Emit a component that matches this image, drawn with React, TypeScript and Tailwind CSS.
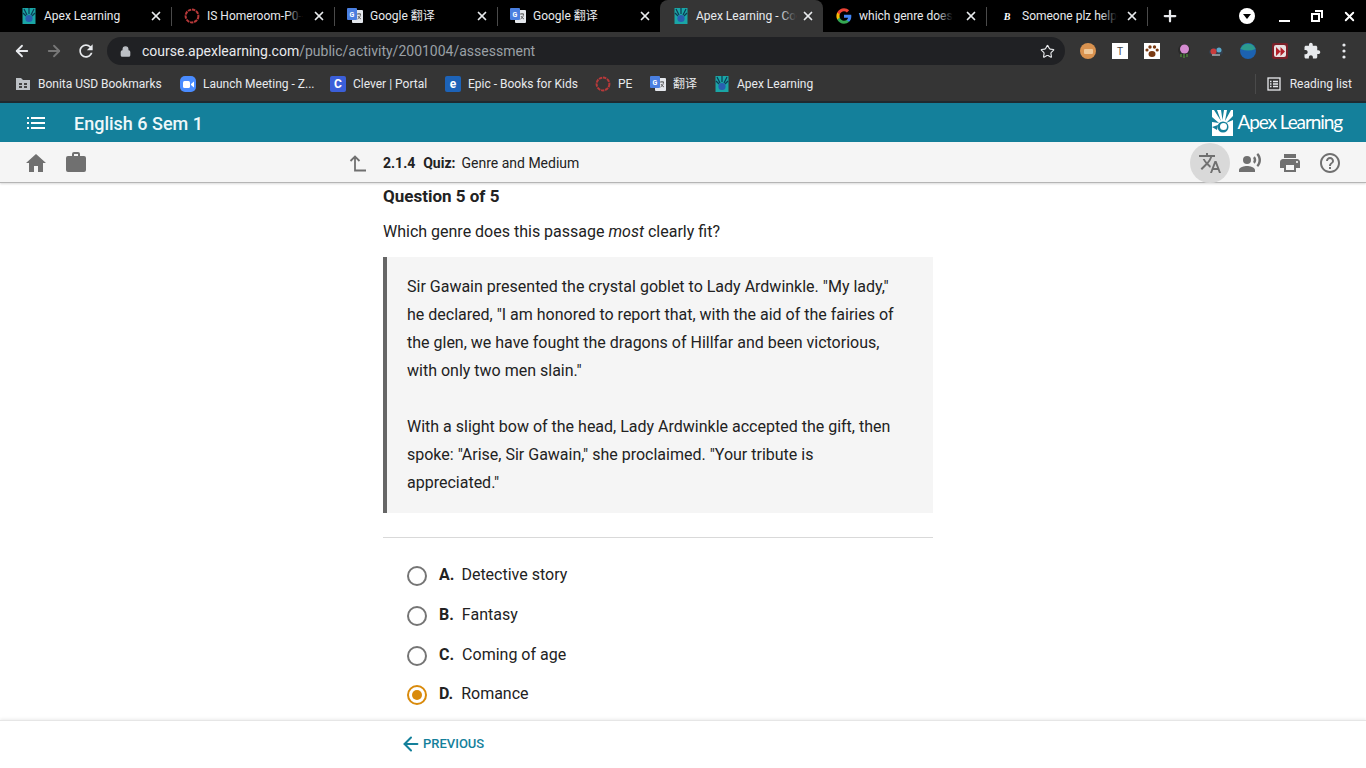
import { ArrowLeft, ArrowRight, Lock, Plus, Star, X } from 'lucide-react';
import type { ReactNode } from 'react';

const FONT = "font-['Roboto','Noto_Sans_CJK_SC',sans-serif]";

function ApexIcon({ size = 16 }: { size?: number }) {
  return (
    <svg width={size} height={size} viewBox="0 0 16 16">
      <rect x="1.5" y="0" width="13" height="16" fill="#1aa6a6" />
      <path d="M3 1l3 6M8 0v6M13 1l-3 6M2 5l3 3M14 5l-3 3" stroke="#0d3a55" strokeWidth="1.2" />
      <circle cx="8" cy="10.5" r="3.6" fill="#2a5fb0" />
    </svg>
  );
}

function RingIcon() {
  return (
    <svg width="16" height="16" viewBox="0 0 16 16">
      <circle cx="8" cy="8" r="6.4" fill="none" stroke="#b8393a" strokeWidth="2" strokeDasharray="3.4 0.8" />
    </svg>
  );
}

function TranslateFav() {
  return (
    <svg width="16" height="16" viewBox="0 0 16 16">
      <rect x="5" y="2" width="11" height="13" rx="1" fill="#e4e7ec" />
      <path d="M10 6h4M12 5v1M10.5 11c2-1 3-3 3-5M11 8c.6 1.4 1.6 2.4 3 3" stroke="#555" strokeWidth="0.9" fill="none" />
      <rect x="0" y="0" width="10" height="12" rx="1" fill="#4a7fe0" />
      <text x="2.4" y="8.6" fontSize="7" fontWeight="700" fill="#fff" fontFamily="Roboto">G</text>
    </svg>
  );
}

function GoogleIcon() {
  return (
    <svg width="16" height="16" viewBox="0 0 24 24">
      <path fill="#4285F4" d="M23 12.3c0-.8-.1-1.600-.2-2.300H12v4.500h6.200c-.3 1.400-1.100 2.600-2.300 3.400v2.800h3.700c2.100-2 3.400-4.900 3.400-8.400z" />
      <path fill="#34A853" d="M12 23.500c3.100 0 5.700-1 7.600-2.800l-3.700-2.800c-1 .7-2.300 1.100-3.900 1.100-3 0-5.500-2-6.400-4.700H1.800v2.900c1.900 3.800 5.800 6.300 10.200 6.300z" />
      <path fill="#FBBC05" d="M5.600 14.300c-.5-1.400-.5-3 0-4.500V6.900H1.800c-1.600 3.200-1.600 7 0 10.300l3.800-2.900z" />
      <path fill="#EA4335" d="M12 5c1.700 0 3.200.6 4.400 1.700l3.300-3.300C17.700 1.600 15.100.5 12 .5 7.600.5 3.700 3 1.800 6.900l3.800 2.900C6.500 7 9 5 12 5z" />
    </svg>
  );
}

function BrainlyIcon() {
  return <span className="flex h-4 w-4 items-center justify-center font-['Liberation_Serif',serif] text-[10px] font-bold italic text-white">B</span>;
}

function ChromeTab({ icon, title, left, active, fade, last }: { icon: ReactNode; title: string; left?: boolean; active?: boolean; fade?: boolean; last?: boolean }) {
  return (
    <div className={`relative flex h-[32px] shrink-0 items-center pl-[13px] pr-[8px] ${last ? 'w-[161px]' : 'w-[163px]'} ${active ? 'rounded-t-[8px] bg-[#353535]' : ''}`}>
      {left && <span className="absolute left-0 top-[7px] h-[19px] w-px bg-[#4a4a4a]" />}
      <span className="mr-[7px] flex w-[16px] shrink-0 justify-center">{icon}</span>
      <span className="relative min-w-0 flex-1 whitespace-nowrap text-[12px] text-[#e8eaed]">
        <span className="relative">
          {title}
          {fade && <span className={`absolute inset-y-0 right-0 w-[16px] bg-gradient-to-r from-transparent ${active ? 'to-[#353535]' : 'to-black'}`} />}
        </span>
      </span>
      <X size={14} strokeWidth={3} className="ml-[6px] shrink-0 text-[#e8eaed]" />
    </div>
  );
}

function TabStrip() {
  return (
    <div className="flex h-[32px] items-center bg-black pl-[8px]">
      <ChromeTab icon={<ApexIcon />} title="Apex Learning" />
      <ChromeTab icon={<RingIcon />} title="IS Homeroom-P0-" left fade />
      <ChromeTab icon={<TranslateFav />} title="Google 翻译" left />
      <ChromeTab icon={<TranslateFav />} title="Google 翻译" left />
      <ChromeTab icon={<ApexIcon />} title="Apex Learning - Co" active fade />
      <ChromeTab icon={<GoogleIcon />} title="which genre does" fade />
      <ChromeTab icon={<BrainlyIcon />} title="Someone plz help" left fade last />
      <span className="h-[19px] w-px bg-[#4a4a4a]" />
      <Plus size={18} strokeWidth={3} className="ml-[13px] text-[#e8eaed]" />
      <div className="ml-auto flex items-center">
        <span className="flex h-[16px] w-[16px] items-center justify-center rounded-full bg-white">
          <span className="h-0 w-0 border-x-[4px] border-t-[5px] border-x-transparent border-t-black" />
        </span>
        <span className="ml-[24px] mt-[10px] h-[2px] w-[11px] bg-white" />
        <svg width="12" height="12" viewBox="0 0 12 12" className="ml-[21px]" fill="none" stroke="#fff" strokeWidth="2">
          <rect x="1" y="4" width="7" height="7" />
          <path d="M4 1h7v7" />
        </svg>
        <X size={15} strokeWidth={3} className="ml-[19px] mr-[9px] text-white" />
      </div>
    </div>
  );
}

function ExtBox({ children }: { children: ReactNode }) {
  return <span className="flex w-[32px] justify-center">{children}</span>;
}

function Toolbar() {
  return (
    <div className="flex h-[38px] items-center bg-[#353535]">
      <ArrowLeft size={18} strokeWidth={2.4} className="ml-[13px] text-[#e8eaed]" />
      <ArrowRight size={18} strokeWidth={2.4} className="ml-[14px] text-[#777]" />
      <svg width="20" height="20" viewBox="0 0 24 24" fill="#e8eaed" className="ml-[13px]">
        <path d="M17.650 6.350C16.200 4.900 14.210 4 12 4c-4.420 0-7.990 3.580-7.990 8s3.570 8 7.990 8c3.730 0 6.840-2.550 7.730-6h-2.080c-.82 2.330-3.040 4-5.650 4-3.310 0-6-2.690-6-6s2.690-6 6-6c1.660 0 3.140.69 4.220 1.780L13 11h7V4l-2.350 2.350z" />
      </svg>
      <div className="ml-[11px] flex h-[28px] w-[958px] items-center rounded-full bg-[#202124]">
        <Lock size={11} strokeWidth={3} fill="#bdc1c6" className="ml-[13px] text-[#bdc1c6]" />
        <span className="ml-[11px] text-[14px] text-[#e8eaed]">
          course.apexlearning.com<span className="text-[#9aa0a6]">/public/activity/2001004/assessment</span>
        </span>
        <Star size={15} strokeWidth={1.8} className="ml-auto mr-[10px] text-[#e8eaed]" />
      </div>
      <div className="ml-[7px] flex items-center">
        <ExtBox>
          <span className="flex h-[16px] w-[16px] items-center justify-center rounded-full bg-[#d9924f]">
            <span className="h-[5px] w-[9px] rounded-[1px] bg-[#f0c99a]" />
          </span>
        </ExtBox>
        <ExtBox>
          <span className="flex h-[16px] w-[16px] items-center justify-center bg-white font-['Liberation_Sans',sans-serif] text-[10px] text-[#444]">T</span>
        </ExtBox>
        <ExtBox>
          <svg width="16" height="16" viewBox="0 0 16 16">
            <rect width="16" height="16" fill="#fff" />
            <g fill="#7a3a12">
              <ellipse cx="8" cy="11" rx="3.500" ry="3" />
              <circle cx="3" cy="7" r="1.600" />
              <circle cx="6" cy="4" r="1.700" />
              <circle cx="10.500" cy="4" r="1.700" />
              <circle cx="13.200" cy="7" r="1.600" />
            </g>
          </svg>
        </ExtBox>
        <ExtBox>
          <svg width="16" height="16" viewBox="0 0 16 16">
            <circle cx="8" cy="7" r="6" fill="#2a2a2a" />
            <circle cx="8.500" cy="6" r="4.500" fill="#d48bd0" />
            <path d="M5 11v3M8 11v4M11 11v3" stroke="#4e8f3a" strokeWidth="1.300" />
          </svg>
        </ExtBox>
        <ExtBox>
          <svg width="16" height="16" viewBox="0 0 16 16">
            <ellipse cx="8" cy="9" rx="7" ry="4" fill="#33404f" />
            <circle cx="5.500" cy="8.500" r="3" fill="#c93c3c" />
            <circle cx="11" cy="7" r="2.500" fill="#5aa7c9" />
            <path d="M4 12h8" stroke="#ddd" strokeWidth="1" />
          </svg>
        </ExtBox>
        <ExtBox>
          <svg width="16" height="16" viewBox="0 0 16 16">
            <circle cx="8" cy="8" r="8" fill="#1c62b0" />
            <path d="M0.500 6a8 8 0 0 1 15 0q-7 3-15 0z" fill="#2c9a8e" />
          </svg>
        </ExtBox>
        <ExtBox>
          <span className="flex h-[16px] w-[16px] items-center justify-center rounded-[2px] bg-[#7c1f28]">
            <span className="flex h-[12px] w-[12px] items-center justify-center rounded-[2px] bg-[#e8e0e0]">
              <svg width="9" height="9" viewBox="0 0 10 10" fill="#b3202a">
                <path d="M0 0l5 5-5 5zM5 0l5 5-5 5z" />
              </svg>
            </span>
          </span>
        </ExtBox>
        <ExtBox>
          <svg width="18" height="18" viewBox="0 0 24 24" fill="#e8eaed">
            <path d="M20.500 11H19V7c0-1.100-.9-2-2-2h-4V3.500C13 2.120 11.880 1 10.500 1S8 2.120 8 3.500V5H4c-1.100 0-1.990.9-1.990 2v3.800H3.500c1.490 0 2.700 1.210 2.700 2.700s-1.210 2.700-2.700 2.700H2V20c0 1.100.9 2 2 2h3.800v-1.500c0-1.490 1.210-2.700 2.700-2.700 1.490 0 2.700 1.210 2.700 2.700V22H17c1.100 0 2-.9 2-2v-4h1.500c1.380 0 2.500-1.120 2.500-2.500S21.880 11 20.500 11z" />
          </svg>
        </ExtBox>
        <ExtBox>
          <svg width="4" height="16" viewBox="0 0 4 16" fill="#e8eaed">
            <circle cx="2" cy="2" r="1.600" />
            <circle cx="2" cy="8" r="1.600" />
            <circle cx="2" cy="14" r="1.600" />
          </svg>
        </ExtBox>
      </div>
    </div>
  );
}

function Bookmark({ icon, label, width }: { icon: ReactNode; label: string; width: string }) {
  return (
    <div className={`flex items-center ${width}`}>
      <span className="mr-[7px] flex w-[16px] shrink-0 justify-center">{icon}</span>
      <span className="whitespace-nowrap text-[12px] text-[#e8eaed]">{label}</span>
    </div>
  );
}

function BookmarksBar() {
  return (
    <div className="flex h-[31px] items-center bg-[#353535] pb-[3px] pl-[15px]">
      <Bookmark
        width="w-[165px]"
        label="Bonita USD Bookmarks"
        icon={
          <svg width="16" height="14" viewBox="0 0 16 14">
            <path d="M1 1h5l2 2h7v10H1z" fill="#bdc1c6" />
            <path d="M4 6h3v2H4zM9 6h3v2H9zM4 9h3v2H4zM9 9h3v2H9z" fill="#444" />
          </svg>
        }
      />
      <Bookmark
        width="w-[150px]"
        label="Launch Meeting - Z..."
        icon={
          <span className="flex h-[16px] w-[16px] items-center justify-center rounded-[5px] bg-[#4a8cff]">
            <svg width="11" height="7" viewBox="0 0 11 7" fill="#fff">
              <rect width="7" height="7" rx="1.500" />
              <path d="M8 3l3-2.500v6L8 4z" />
            </svg>
          </span>
        }
      />
      <Bookmark
        width="w-[115px]"
        label="Clever | Portal"
        icon={<span className="flex h-[16px] w-[16px] items-center justify-center rounded-[2px] bg-[#3b5fd9] text-[12px] font-bold text-white">C</span>}
      />
      <Bookmark
        width="w-[150px]"
        label="Epic - Books for Kids"
        icon={<span className="flex h-[16px] w-[16px] items-center justify-center rounded-[2px] bg-[#1d63b8] text-[12px] font-bold text-white">e</span>}
      />
      <Bookmark width="w-[55px]" label="PE" icon={<RingIcon />} />
      <Bookmark width="w-[64px]" label="翻译" icon={<TranslateFav />} />
      <Bookmark width="w-[120px]" label="Apex Learning" icon={<ApexIcon />} />
      <div className="ml-auto flex h-[20px] items-center border-l border-[#4a4a4a] pl-[11px] pr-[14px]">
        <svg width="14" height="14" viewBox="0 0 14 14" fill="none" stroke="#e8eaed" strokeWidth="1.300" className="mr-[9px]">
          <rect x="1" y="1" width="12" height="12" />
          <path d="M3 4.500h1.500M6 4.500h5M3 7h1.500M6 7h5M3 9.500h1.500M6 9.500h5" />
        </svg>
        <span className="text-[12px] text-[#e8eaed]">Reading list</span>
      </div>
    </div>
  );
}

function CourseHeader() {
  return (
    <div className="flex h-[39px] items-center bg-[#14809b] pl-[27px] pr-[24px]">
      <svg width="18" height="12" viewBox="0 0 18 12" fill="#fff">
        <path d="M0 0h2v2H0zM4 0h14v2H4zM0 5h2v2H0zM4 5h14v2H4zM0 10h2v2H0zM4 10h14v2H4z" />
      </svg>
      <span className="ml-[29px] translate-y-px text-[18px] font-medium text-[#eef8fa]">English 6 Sem 1</span>
      <div className="ml-auto flex items-center">
        <svg width="21" height="26" viewBox="0 0 21 26">
          <rect width="21" height="26" fill="#fff" />
          <path d="M2 0h3l4 11zM9 0h3l-1.500 10zM15 0h4l-6 11zM21 6v4l-7 3zM0 7l7 6-7-1zM0 17l6-2-1 5z" fill="#14809b" />
          <circle cx="11" cy="17" r="5.500" fill="#14809b" />
          <circle cx="11.500" cy="16.500" r="3.500" fill="#fff" />
        </svg>
        <span className="ml-[4px] font-['Lato',sans-serif] text-[19px] tracking-[-1.100px] text-white">Apex Learning</span>
      </div>
    </div>
  );
}

function SubHeader() {
  return (
    <div className="relative z-10 flex h-[41px] items-center border-b border-[#b5b5b5] bg-[#f5f5f5] pl-[26px] pr-[16px] pt-[2px] shadow-[0_1px_2px_rgba(0,0,0,0.15)]">
      <svg width="20" height="18" viewBox="0 0 20 18" fill="#707070">
        <path d="M10 0L0 9h3v9h5v-6h4v6h5V9h3z" />
      </svg>
      <svg width="20" height="20" viewBox="0 0 20 20" fill="#707070" className="ml-[20px] -translate-y-px">
        <path d="M6 4V2a2 2 0 0 1 2-2h4a2 2 0 0 1 2 2v2h4a2 2 0 0 1 2 2v12a2 2 0 0 1-2 2H2a2 2 0 0 1-2-2V6a2 2 0 0 1 2-2zm2 0h4V2H8z" fillRule="evenodd" />
      </svg>
      <svg width="18" height="17" viewBox="0 0 18 17" fill="none" stroke="#707070" strokeWidth="1.800" className="ml-[263px]">
        <path d="M1.500 6L6 1.500 10.500 6M6 1.500V15.500H17" />
      </svg>
      <div className="ml-[16px] flex items-center text-[14px] text-[#222]">
        <span className="font-bold">2.1.4</span>
        <span className="ml-[8px] font-bold">Quiz:</span>
        <span className="ml-[6px]">Genre and Medium</span>
      </div>
      <div className="ml-auto flex items-center">
        <span className="flex h-[40px] w-[40px] items-center justify-center rounded-full bg-[#d9d9d9]">
          <svg width="24" height="24" viewBox="0 0 24 24" fill="#707070">
            <path d="M12.870 15.070l-2.540-2.510.03-.03c1.740-1.940 2.980-4.170 3.710-6.530H17V4h-7V2H8v2H1v1.990h11.170C11.500 7.920 10.440 9.750 9 11.350 8.070 10.320 7.300 9.190 6.690 8h-2c.73 1.630 1.730 3.170 2.980 4.560l-5.090 5.020L4 19l5-5 3.110 3.110.76-2.040zM18.500 10h-2L12 22h2l1.120-3h4.750L21 22h2l-4.500-12zm-2.620 7l1.620-4.330L19.120 17h-3.240z" />
          </svg>
        </span>
        <span className="flex w-[40px] justify-center">
          <svg width="24" height="24" viewBox="0 0 24 24" fill="#707070">
            <circle cx="9" cy="9" r="4" />
            <path d="M9 15c-2.670 0-8 1.340-8 4v2h16v-2c0-2.660-5.330-4-8-4zM16.760 5.360l-1.680 1.690c.84 1.180.84 2.710 0 3.890l1.680 1.690c2.020-2.020 2.020-5.070 0-7.270zM20.070 2l-1.630 1.630c2.770 3.020 2.770 7.560 0 10.740L20.070 16c3.900-3.890 3.910-9.950 0-14z" />
          </svg>
        </span>
        <span className="flex w-[40px] justify-center">
          <svg width="24" height="24" viewBox="0 0 24 24" fill="#707070">
            <path d="M19 8H5c-1.660 0-3 1.340-3 3v6h4v4h12v-4h4v-6c0-1.660-1.340-3-3-3zm-3 11H8v-5h8v5zm3-7c-.55 0-1-.45-1-1s.45-1 1-1 1 .45 1 1-.45 1-1 1zm-1-9H6v4h12V3z" />
          </svg>
        </span>
        <span className="flex w-[40px] justify-center">
          <svg width="24" height="24" viewBox="0 0 24 24" fill="#707070">
            <path d="M11 18h2v-2h-2v2zm1-16C6.480 2 2 6.480 2 12s4.480 10 10 10 10-4.480 10-10S17.520 2 12 2zm0 18c-4.410 0-8-3.590-8-8s3.590-8 8-8 8 3.590 8 8-3.590 8-8 8zm0-14c-2.210 0-4 1.790-4 4h2c0-1.100.9-2 2-2s2 .9 2 2c0 2-3 1.750-3 5h2c0-2.250 3-2.500 3-5 0-2.210-1.790-4-4-4z" />
          </svg>
        </span>
      </div>
    </div>
  );
}

const OPTIONS = [
  { letter: 'A.', text: 'Detective story', gap: 'ml-[7px]' },
  { letter: 'B.', text: 'Fantasy', gap: 'ml-[8px]' },
  { letter: 'C.', text: 'Coming of age', gap: 'ml-[8px]' },
  { letter: 'D.', text: 'Romance', gap: 'ml-[8px]', selected: true },
];

function Option({ letter, text, gap, selected }: { letter: string; text: string; gap: string; selected?: boolean }) {
  return (
    <div className="flex h-[39.700px] items-center pl-[24px]">
      {selected ? (
        <span className="flex h-[20px] w-[20px] items-center justify-center rounded-full border-2 border-[#d98a0b]">
          <span className="h-[10px] w-[10px] rounded-full bg-[#d98a0b]" />
        </span>
      ) : (
        <span className="h-[20px] w-[20px] rounded-full border-2 border-[#757575]" />
      )}
      <span className="ml-[12px] -translate-y-px text-[16px] font-bold text-[#222]">{letter}</span>
      <span className={`${gap} -translate-y-px text-[16px] text-[#222]`}>{text}</span>
    </div>
  );
}

function QuizBody() {
  return (
    <div className="h-[537px] overflow-hidden bg-white pl-[383px]">
      <div className="w-[550px]">
        <h2 className="pt-[2px] text-[17px] font-bold leading-[22px] text-[#222]">Question 5 of 5</h2>
        <p className="mt-[13px] text-[16px] leading-[24px] text-[#222]">
          Which genre does this passage <em>most</em> clearly fit?
        </p>
        <div className="mt-[13px] h-[256px] border-l-4 border-[#666] bg-[#f5f5f5] pb-[15px] pl-[20px] pr-[24px] pt-[16px] text-[16px] leading-[28px] text-[#222]">
          <p>
            Sir Gawain presented the crystal goblet to Lady Ardwinkle. "My lady," he declared, "I am honored to report that, with the aid of the fairies of the glen, we have fought the dragons of Hillfar and been victorious, with only two men slain."
          </p>
          <p className="mt-[28px]">
            With a slight bow of the head, Lady Ardwinkle accepted the gift, then spoke: "Arise, Sir Gawain," she proclaimed. "Your tribute is appreciated."
          </p>
        </div>
        <div className="mt-[24px] border-t border-[#d9d9d9] pt-[18.300px]">
          {OPTIONS.map((o) => (
            <Option key={o.letter} {...o} />
          ))}
        </div>
      </div>
    </div>
  );
}

function Footer() {
  return (
    <div className="flex h-[48px] items-center border-t border-[#e6e6e6] bg-white pb-[2px] pl-[400px] shadow-[0_-1px_3px_rgba(0,0,0,0.08)]">
      <ArrowLeft size={22} strokeWidth={2.200} className="text-[#14809b]" />
      <span className="ml-[1px] text-[13px] font-medium text-[#14809b]">PREVIOUS</span>
    </div>
  );
}

export default function App() {
  return (
    <div className={`flex h-[768px] w-[1366px] flex-col overflow-hidden bg-white ${FONT}`}>
      <TabStrip />
      <Toolbar />
      <BookmarksBar />
      <div className="h-[2px] bg-[#1f2a30]" />
      <CourseHeader />
      <SubHeader />
      <QuizBody />
      <Footer />
    </div>
  );
}
